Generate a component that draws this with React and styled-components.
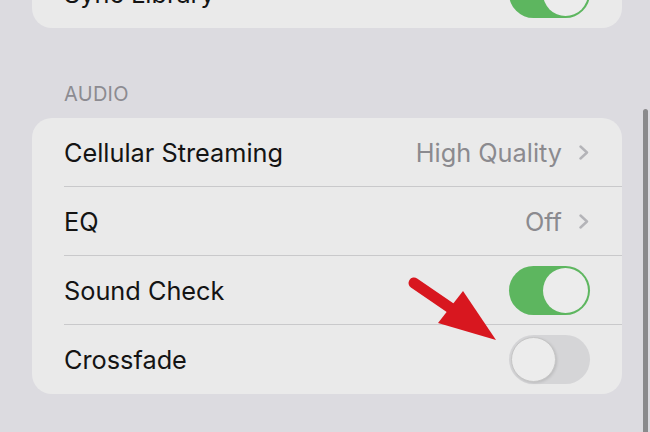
import React from "react";
import styled, { createGlobalStyle } from "styled-components";

const GlobalStyle = createGlobalStyle`
  body {
    margin: 0;
    background: #dcdbe0;
    font-family: Inter, "Liberation Sans", sans-serif;
  }
`;

function Toggle({ on }) {
  return (
    <Switch $on={on}>
      <Knob $on={on} />
    </Switch>
  );
}

function Chevron() {
  return (
    <svg width="12" height="15" viewBox="0 0 12 15">
      <path
        d="M2.5 1.5 L9 7.5 L2.5 13.5"
        fill="none"
        stroke="#b4b4b8"
        strokeWidth="2.4"
        strokeLinecap="round"
        strokeLinejoin="round"
      />
    </svg>
  );
}

function App() {
  return (
    <Screen>
      <GlobalStyle />
      <Card $first>
        <Row $last>
          <Label>Sync Library</Label>
          <Toggle on />
        </Row>
      </Card>

      <Header>AUDIO</Header>
      <Card>
        <Row>
          <Label>Cellular Streaming</Label>
          <Detail>
            High Quality
            <Chevron />
          </Detail>
        </Row>
        <Row>
          <Label>EQ</Label>
          <Detail>
            Off
            <Chevron />
          </Detail>
        </Row>
        <Row>
          <Label>Sound Check</Label>
          <Toggle on />
        </Row>
        <Row $last>
          <Label>Crossfade</Label>
          <Toggle on={false} />
        </Row>
      </Card>

      <Arrow width="110" height="80" viewBox="400 270 110 80">
        <line
          x1="414"
          y1="283"
          x2="452"
          y2="309"
          stroke="#d8171f"
          strokeWidth="11"
          strokeLinecap="round"
        />
        <polygon points="438,323 463,291 496,340" fill="#d8171f" />
      </Arrow>
      <ScrollBar />
    </Screen>
  );
}

const Screen = styled.div`
  position: relative;
  width: 650px;
  height: 432px;
  overflow: hidden;
  box-sizing: border-box;
  padding: 0 28px 0 32px;
`;

const Card = styled.div`
  background: #eaeaea;
  border-radius: 20px;
  margin-top: ${(p) => (p.$first ? "-41px" : "0")};
`;

const Header = styled.div`
  margin: 54px 0 0;
  padding: 0 32px 12px;
  font-size: 20px;
  line-height: 24px;
  color: #8c8b91;
  letter-spacing: 0.3px;
`;

const Row = styled.div`
  height: 69px;
  margin-left: 32px;
  padding-right: 32px;
  box-sizing: border-box;
  display: flex;
  align-items: center;
  justify-content: space-between;
  border-bottom: ${(p) => (p.$last ? "none" : "1.5px solid #c9c9cb")};
`;

const Label = styled.span`
  font-size: 25.3px;
  color: #141414;
`;

const Detail = styled.span`
  display: flex;
  align-items: center;
  gap: 16px;
  font-size: 25.3px;
  color: #8b8a8f;
`;

const Switch = styled.div`
  width: 81px;
  height: 49px;
  border-radius: 25px;
  box-sizing: border-box;
  padding: 2px;
  display: flex;
  justify-content: ${(p) => (p.$on ? "flex-end" : "flex-start")};
  background: ${(p) => (p.$on ? "#5db65f" : "#d5d5d7")};
`;

const Knob = styled.div`
  width: 45px;
  height: 45px;
  border-radius: 50%;
  box-sizing: border-box;
  background: #ececec;
  border: ${(p) => (p.$on ? "none" : "1.5px solid #c6c6c6")};
  box-shadow: ${(p) => (p.$on ? "none" : "1px 1px 3px rgba(0,0,0,0.12)")};
`;

const Arrow = styled.svg`
  position: absolute;
  left: 400px;
  top: 270px;
`;

const ScrollBar = styled.div`
  position: absolute;
  left: 643px;
  top: 109px;
  bottom: 0;
  width: 5px;
  border-radius: 3px 3px 0 0;
  background: #8a8a8c;
`;

export default App;
